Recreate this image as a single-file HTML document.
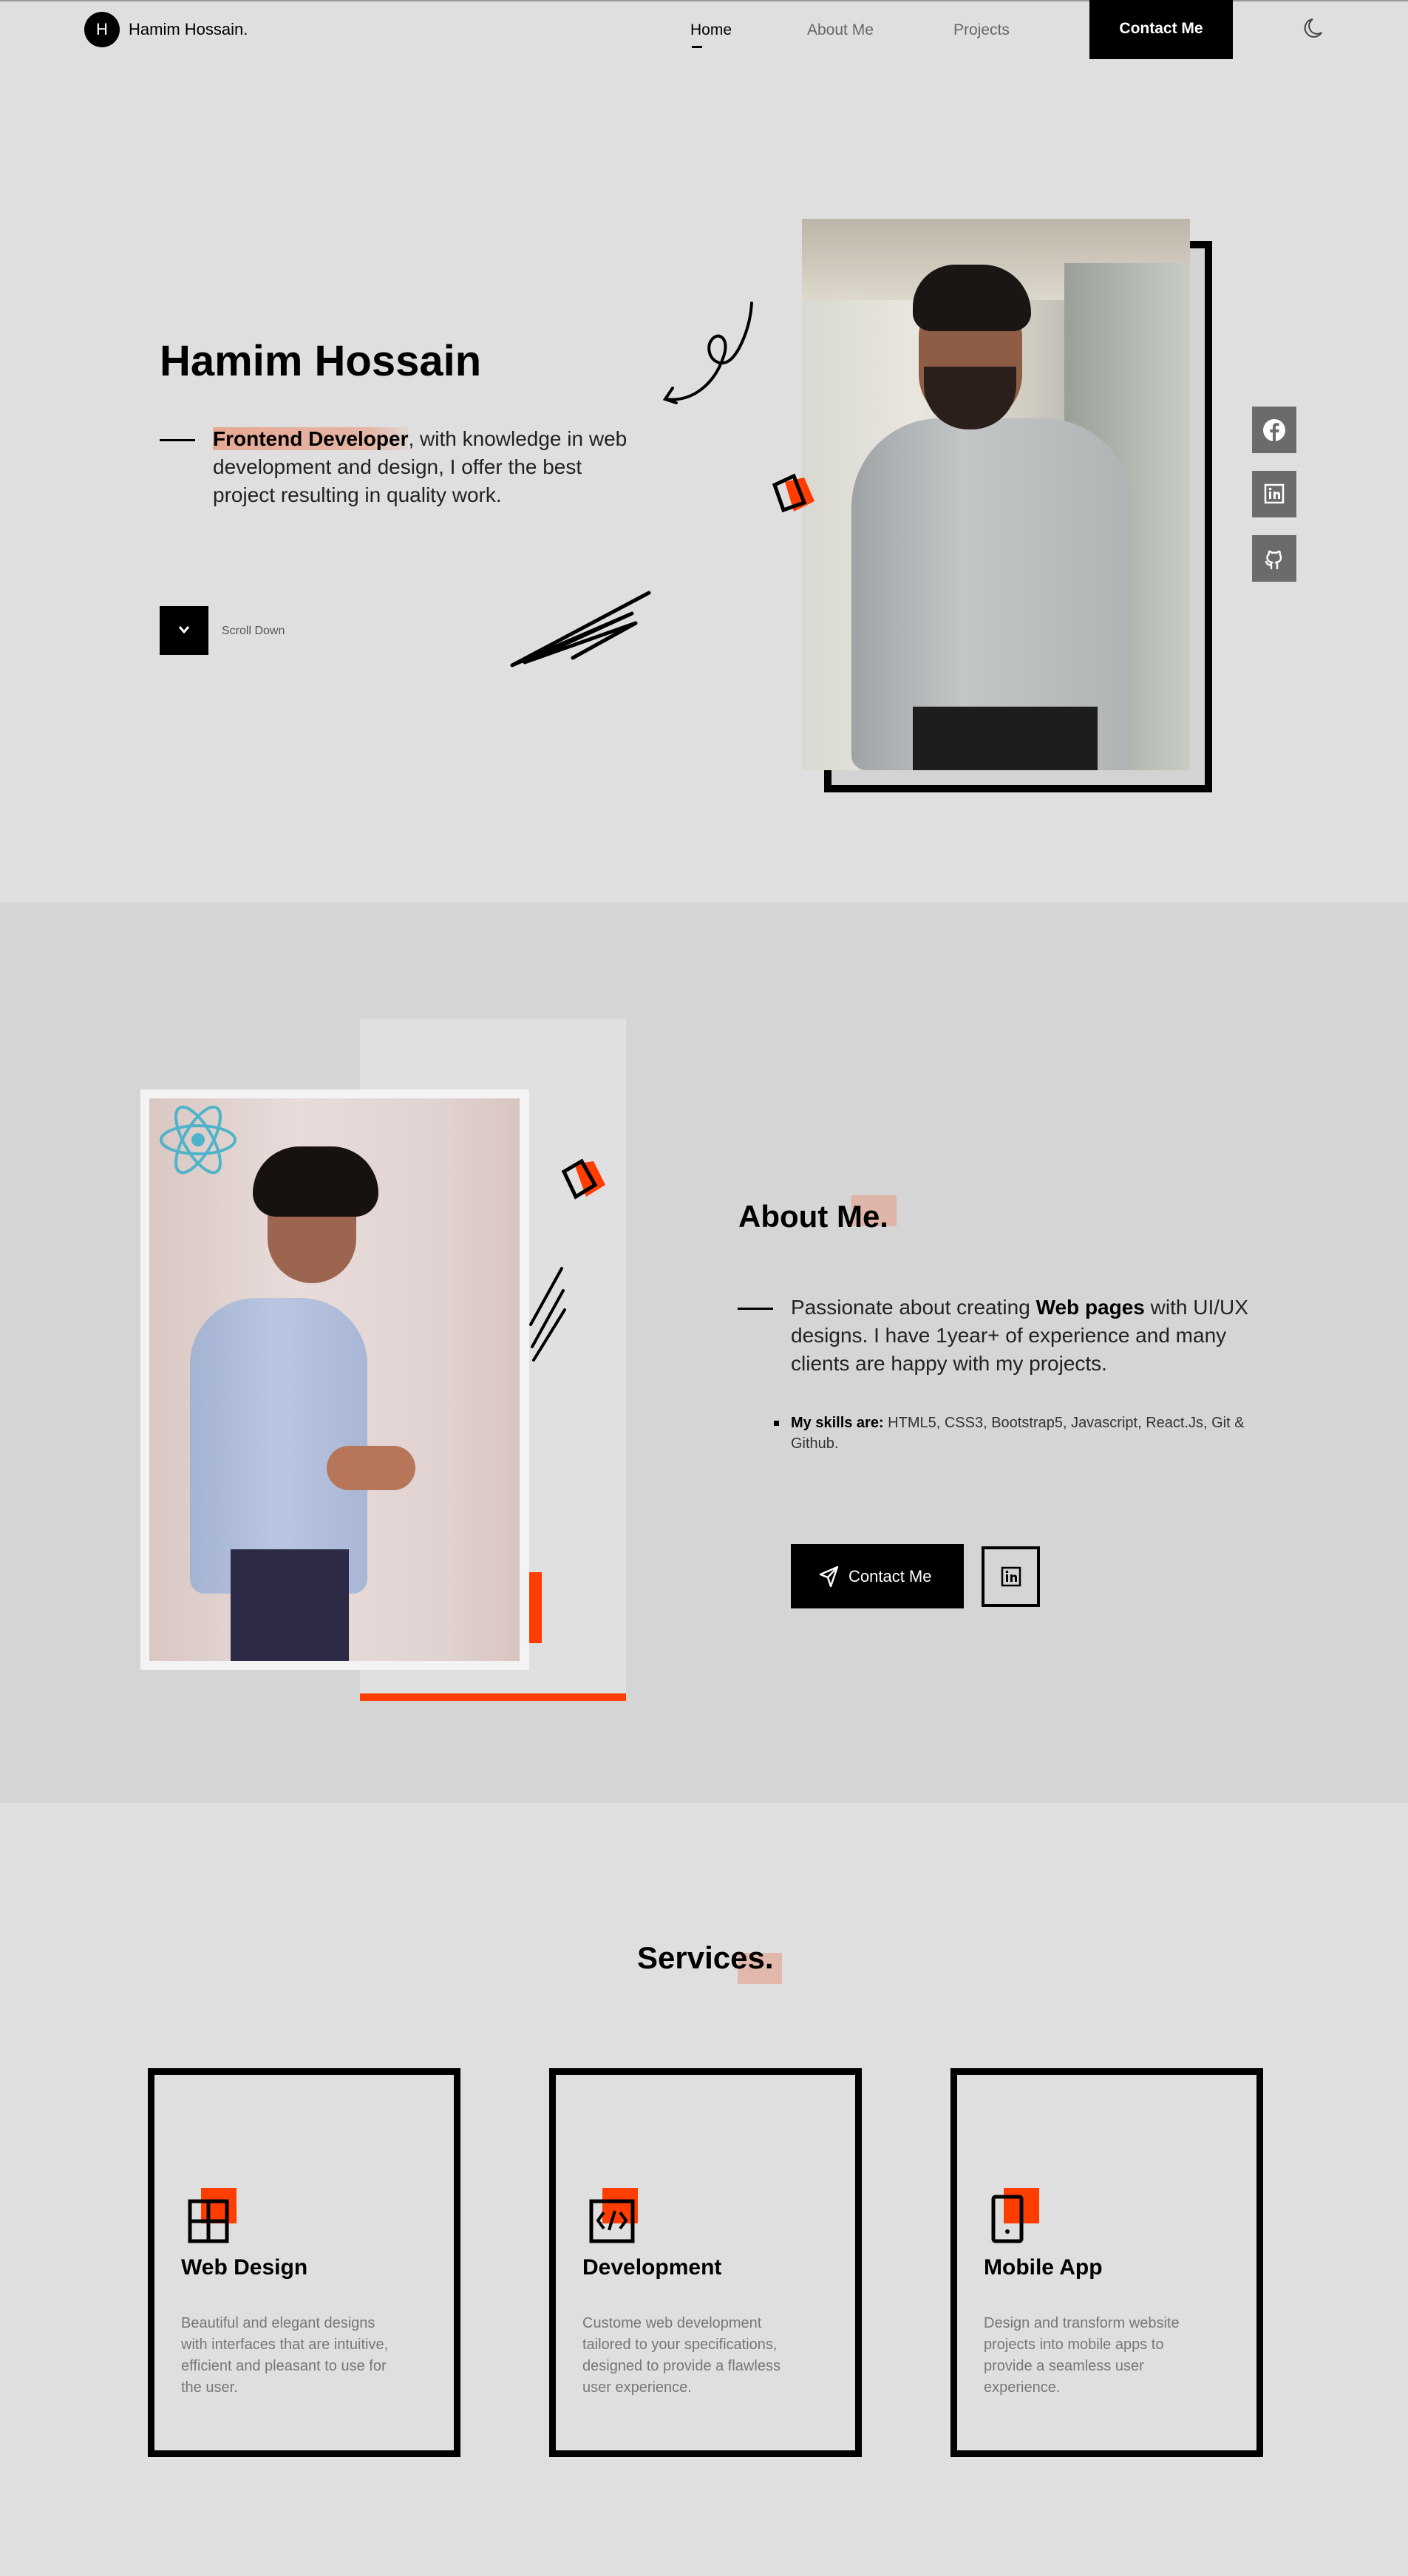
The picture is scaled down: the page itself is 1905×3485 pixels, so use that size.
<!DOCTYPE html>
<html><head><meta charset="utf-8"><style>
*{margin:0;padding:0;box-sizing:border-box}
body{width:1905px;height:3485px;background:#dfdfdf;font-family:"Liberation Sans",sans-serif;color:#111;position:relative;overflow:hidden}
.a{position:absolute}
.nav a{position:absolute;font-size:21px;color:#666;text-decoration:none}
.hl{background:linear-gradient(90deg,#e6a993,#e6b5a6 80%,rgba(230,181,166,0.2))}
.card{position:absolute;top:2798px;width:423px;height:526px;border:9px solid #000}
.card h3{position:absolute;left:36px;top:244px;font-size:30px;font-weight:bold;color:#000}
.card p{position:absolute;left:36px;top:322px;width:292px;font-size:20px;line-height:29px;color:#777}
.card .sq{position:absolute;left:63px;top:153px;width:48px;height:48px;background:#ff3d00}
.soc{position:absolute;left:1694px;width:60px;height:63px;background:#6b6b6b}
</style></head><body>
<div class="a" style="left:0;top:0;width:1905px;height:2px;background:#999"></div>
<!-- nav -->
<div class="a" style="left:114px;top:16px;width:48px;height:48px;border-radius:50%;background:#000;color:#fff;font-size:22px;text-align:center;line-height:48px">H</div>
<div class="a" style="left:174px;top:27px;font-size:22px;color:#000">Hamim Hossain.</div>
<div class="nav">
<a style="left:934px;top:29px;color:#000">Home</a>
<a style="left:1092px;top:29px">About Me</a>
<a style="left:1290px;top:29px">Projects</a>
</div>
<div class="a" style="left:936px;top:62px;width:14px;height:3px;background:#000"></div>
<div class="a" style="left:1474px;top:0;width:194px;height:80px;background:#000;color:#fff;font-size:21px;text-align:center;line-height:78px;font-weight:bold">Contact Me</div>
<svg class="a" style="left:1764px;top:24px" width="26" height="28" viewBox="0 0 26 28"><path d="M12 2 A12 12 0 1 0 24 20 A10 10 0 0 1 12 2Z" fill="none" stroke="#444" stroke-width="2"/></svg>

<!-- hero -->
<div class="a" style="left:216px;top:455px;font-size:58px;font-weight:bold;color:#000">Hamim Hossain</div>
<div class="a" style="left:216px;top:594px;width:48px;height:3px;background:#000"></div>
<div class="a" style="left:288px;top:575px;width:565px;font-size:28px;line-height:38px;color:#222"><b class="hl" style="color:#000">Frontend Developer</b>, with knowledge in web development and design, I offer the best project resulting in quality work.</div>
<svg class="a" style="left:880px;top:405px" width="150" height="150" viewBox="0 0 150 150"><path d="M137 5 C135 40 120 70 110 80 C95 95 75 80 80 60 C88 40 110 50 98 80 C88 110 60 140 20 135 M30 120 L20 135 L35 140" fill="none" stroke="#000" stroke-width="4" stroke-linecap="round"/></svg>
<div class="a" style="left:216px;top:820px;width:66px;height:66px;background:#000"></div>
<svg class="a" style="left:240px;top:845px" width="18" height="14" viewBox="0 0 18 14"><path d="M3 3 L9 10 L15 3" fill="none" stroke="#fff" stroke-width="3"/></svg>
<div class="a" style="left:300px;top:845px;font-size:16px;color:#555">Scroll Down</div>
<svg class="a" style="left:685px;top:798px" width="200" height="110" viewBox="0 0 200 110"><path d="M193 4 L8 102 L170 32 L25 98 L175 45 L90 92" fill="none" stroke="#000" stroke-width="5" stroke-linecap="round" stroke-linejoin="round"/></svg>
<!-- photo frame -->
<div class="a" style="left:1115px;top:326px;width:525px;height:746px;border:10px solid #000;background:#d3d3d3"></div>
<div class="a" style="left:1085px;top:296px;width:525px;height:746px;background:linear-gradient(90deg,#d8d9d2 0%,#e9e6de 30%,#cfcac0 60%,#a9aca6 80%,#c6c7c0 100%);overflow:hidden">
 <div class="a" style="left:0;top:0;width:525px;height:110px;background:linear-gradient(180deg,#bcb6a8,#ddd8cc)"></div>
 <div class="a" style="left:355px;top:60px;width:170px;height:686px;background:linear-gradient(90deg,#9aa098,#c7ccc4)"></div>
 <div class="a" style="left:67px;top:270px;width:380px;height:476px;border-radius:120px 120px 20px 20px;background:linear-gradient(90deg,#9fa3a5,#c3c6c7 40%,#b0b3b4)"></div>
 <div class="a" style="left:158px;top:100px;width:140px;height:180px;border-radius:60px 60px 70px 70px;background:#8d5d45"></div>
 <div class="a" style="left:150px;top:62px;width:160px;height:90px;border-radius:70px 80px 30px 30px;background:#1a1614"></div>
 <div class="a" style="left:165px;top:200px;width:125px;height:85px;border-radius:0 0 60px 60px;background:#2a1f1a"></div>
 <div class="a" style="left:150px;top:660px;width:250px;height:86px;background:#1d1d1f"></div>
</div>
<svg class="a" style="left:1042px;top:638px" width="70" height="62" viewBox="0 0 70 62"><path d="M20 14 L46 8 L60 40 L32 54Z" fill="#ff3d00"/><path d="M6 18 L32 6 L46 42 L18 52Z" fill="none" stroke="#000" stroke-width="5"/></svg>
<div class="soc" style="top:550px"></div><div class="soc" style="top:637px"></div><div class="soc" style="top:724px"></div>
<svg class="a" style="left:1708px;top:566px" width="32" height="32" viewBox="0 0 32 32"><circle cx="16" cy="16" r="15" fill="#fff"/><path d="M18 32 V19 h4 l0.6-4 H18 v-3 c0-1.2 .5-2 2-2 h2.6 V6.5 c-1-.1-2.2-.2-3.4-.2-3.2 0-5.2 1.8-5.2 5.3 V15 h-3.6 v4 H14 v13Z" fill="#6b6b6b"/></svg>
<svg class="a" style="left:1710px;top:654px" width="28" height="28" viewBox="0 0 28 28"><rect x="2" y="2" width="24" height="24" fill="none" stroke="#fff" stroke-width="2.5"/><rect x="7" y="11" width="3" height="10" fill="#fff"/><circle cx="8.5" cy="7.5" r="1.8" fill="#fff"/><path d="M13 21 V11 h3 v2 c1-2 6-2.5 6 2 v6 h-3 v-5.5 c0-2-3-2-3 0 V21Z" fill="#fff"/></svg>
<svg class="a" style="left:1710px;top:739px" width="28" height="32" viewBox="0 0 28 32"><path d="M10 30 v-5 c-5 1-6-2-7-4 M18 30 v-5 c0-2-1-3-2-3 c4-.5 7-2 7-7 c0-2-.5-3-1.5-4 c.3-1 .3-3-.3-4 c-1.5 0-3 1-4 2 c-2-.5-4-.5-6 0 c-1-1-2.5-2-4-2 c-.6 1-.6 3-.3 4 C5 12 4.5 13 4.5 15 c0 5 3 6.5 7 7 c-1 0-1.8 1-1.8 3" fill="none" stroke="#fff" stroke-width="2.4" stroke-linecap="round" stroke-linejoin="round"/></svg>

<!-- about -->
<div class="a" style="left:0;top:1221px;width:1905px;height:1218px;background:#d5d5d5"></div>
<div class="a" style="left:487px;top:1378px;width:360px;height:923px;background:#e0e0e0"></div>
<div class="a" style="left:487px;top:2291px;width:360px;height:10px;background:#ff3d00"></div>
<div class="a" style="left:716px;top:2127px;width:17px;height:96px;background:#ff3d00"></div>
<svg class="a" style="left:712px;top:1712px" width="56" height="132" viewBox="0 0 56 132"><path d="M48 4 L6 80 M50 34 L8 110 M52 60 L10 128" stroke="#000" stroke-width="4" stroke-linecap="round"/></svg>
<svg class="a" style="left:755px;top:1565px" width="72" height="62" viewBox="0 0 72 62"><path d="M22 10 L48 6 L64 38 L38 54Z" fill="#ff3d00"/><path d="M8 20 L32 6 L50 38 L24 54Z" fill="none" stroke="#000" stroke-width="5"/></svg>
<div class="a" style="left:190px;top:1474px;width:526px;height:785px;background:#f3f3f3"></div>
<div class="a" style="left:202px;top:1486px;width:501px;height:761px;background:linear-gradient(90deg,#d9c7c2,#e8dcda 40%,#e0d2d0 80%,#d8c5c0);overflow:hidden">
 <div class="a" style="left:55px;top:270px;width:240px;height:400px;border-radius:90px 90px 20px 20px;background:linear-gradient(90deg,#a4b3d3,#bac6e1 50%,#a8b6d6)"></div>
 <div class="a" style="left:240px;top:470px;width:120px;height:60px;border-radius:30px;background:#b7765a"></div>
 <div class="a" style="left:160px;top:90px;width:120px;height:160px;border-radius:50px 50px 60px 60px;background:#9c6550"></div>
 <div class="a" style="left:140px;top:65px;width:170px;height:95px;border-radius:80px 80px 40px 40px;background:#17120f"></div>
 <div class="a" style="left:110px;top:610px;width:160px;height:151px;background:#2c2a44"></div>
</div>
<svg class="a" style="left:214px;top:1494px" width="108" height="96" viewBox="0 0 108 96"><g fill="none" stroke="#4fb3c9" stroke-width="4"><ellipse cx="54" cy="48" rx="50" ry="19"/><ellipse cx="54" cy="48" rx="50" ry="19" transform="rotate(60 54 48)"/><ellipse cx="54" cy="48" rx="50" ry="19" transform="rotate(-60 54 48)"/></g><circle cx="54" cy="48" r="9" fill="#4fb3c9"/></svg>

<div class="a" style="left:1152px;top:1617px;width:61px;height:42px;background:#e0b5a9"></div>
<div class="a" style="left:999px;top:1622px;font-size:42px;font-weight:bold;color:#000">About Me.</div>
<div class="a" style="left:998px;top:1769px;width:48px;height:3px;background:#000"></div>
<div class="a" style="left:1070px;top:1750px;width:650px;font-size:28px;line-height:38px;color:#222">Passionate about creating <b style="color:#000">Web pages</b> with UI/UX designs. I have 1year+ of experience and many clients are happy with my projects.</div>
<div class="a" style="left:1047px;top:1922px;width:7px;height:7px;background:#000"></div>
<div class="a" style="left:1070px;top:1911px;width:630px;font-size:20px;line-height:28px;color:#333"><b style="color:#000">My skills are:</b> HTML5, CSS3, Bootstrap5, Javascript, React.Js, Git &amp; Github.</div>
<div class="a" style="left:1070px;top:2089px;width:234px;height:87px;background:#000;color:#fff;font-size:22px;line-height:87px;padding-left:78px">Contact Me</div>
<svg class="a" style="left:1108px;top:2118px" width="28" height="30" viewBox="0 0 28 30"><path d="M25 2 L2 12 L12 16 L16 28 Z M12 16 L25 2" fill="none" stroke="#fff" stroke-width="2.5" stroke-linejoin="round"/></svg>
<div class="a" style="left:1328px;top:2092px;width:79px;height:82px;border:4px solid #000"></div>
<svg class="a" style="left:1354px;top:2119px" width="28" height="28" viewBox="0 0 28 28"><rect x="2" y="2" width="24" height="24" fill="none" stroke="#000" stroke-width="2.5"/><rect x="7" y="11" width="3" height="10" fill="#000"/><circle cx="8.5" cy="7.5" r="1.8" fill="#000"/><path d="M13 21 V11 h3 v2 c1-2 6-2.5 6 2 v6 h-3 v-5.5 c0-2-3-2-3 0 V21Z" fill="#000"/></svg>

<!-- services -->
<div class="a" style="left:998px;top:2642px;width:60px;height:42px;background:#e2b8ad"></div>
<div class="a" style="left:862px;top:2625px;font-size:42px;font-weight:bold;color:#000">Services.</div>
<div class="card" style="left:200px"><div class="sq"></div>
<svg class="a" style="left:45px;top:168px" width="56" height="60" viewBox="0 0 56 60"><rect x="3" y="3" width="50" height="54" fill="none" stroke="#000" stroke-width="5"/><path d="M3 30 H53 M28 3 V57" stroke="#000" stroke-width="5"/></svg>
<h3>Web Design</h3><p>Beautiful and elegant designs with interfaces that are intuitive, efficient and pleasant to use for the user.</p></div>
<div class="card" style="left:743px"><div class="sq"></div>
<svg class="a" style="left:45px;top:168px" width="62" height="60" viewBox="0 0 62 60"><rect x="3" y="3" width="56" height="54" fill="none" stroke="#000" stroke-width="5"/><path d="M20 18 L12 29 L20 40 M42 18 L50 29 L42 40 M35 16 L27 42" fill="none" stroke="#000" stroke-width="4"/></svg>
<h3>Development</h3><p>Custome web development tailored to your specifications, designed to provide a flawless user experience.</p></div>
<div class="card" style="left:1286px"><div class="sq"></div>
<svg class="a" style="left:45px;top:162px" width="46" height="66" viewBox="0 0 46 66"><rect x="4" y="3" width="38" height="60" rx="3" fill="none" stroke="#000" stroke-width="5"/><circle cx="23" cy="50" r="3" fill="#000"/></svg>
<h3>Mobile App</h3><p>Design and transform website projects into mobile apps to provide a seamless user experience.</p></div>
</body></html>
